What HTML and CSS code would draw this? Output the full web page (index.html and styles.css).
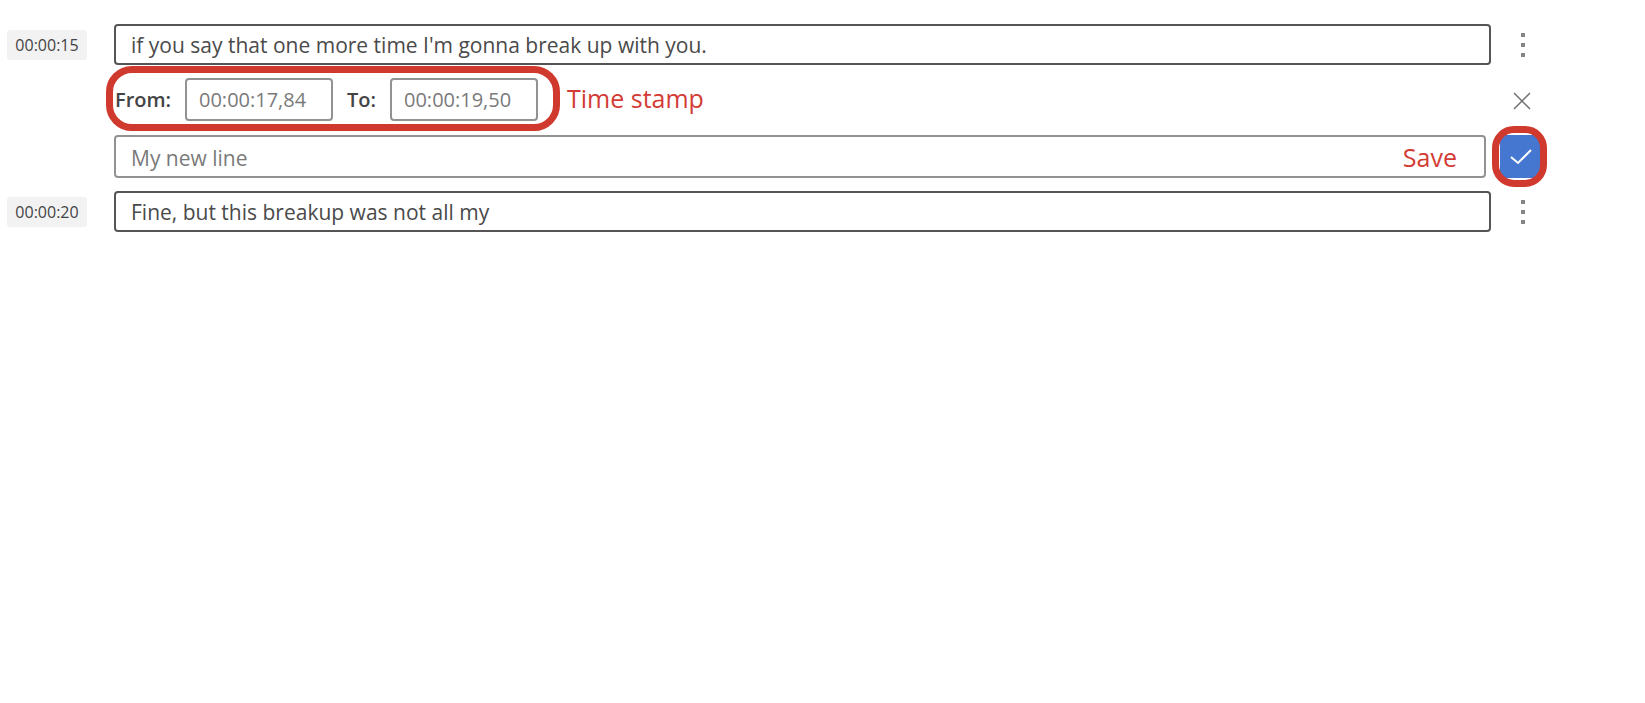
FILE: index.html
```html
<!DOCTYPE html>
<html lang="en">
<head>
<meta charset="utf-8">
<title>Transcript editor</title>
<link rel="stylesheet" href="styles.css">
</head>
<body>
<main class="transcript">
  <div class="row">
    <label class="time" for="line-1">00:00:15</label>
    <input class="field line" id="line-1" type="text" value="if you say that one more time I'm gonna break up with you.">
    <button class="icon-button" type="button" aria-label="More options">
      <svg class="dots" viewBox="0 0 8 24"><path d="M2 0h4v4H2zM2 10h4v4H2zM2 20h4v4H2z"/></svg>
    </button>
  </div>
  <form class="editor">
    <div class="editor-row">
      <div class="range">
        <label class="range-label" for="from">From:</label>
        <input class="field stamp" id="from" type="text" value="00:00:17,84">
        <label class="range-label to" for="to">To:</label>
        <input class="field stamp" id="to" type="text" value="00:00:19,50">
      </div>
      <span class="note">Time stamp</span>
      <button class="icon-button close" type="button" aria-label="Cancel">
        <svg class="cross" viewBox="0 0 20 20"><path d="M2 2l16 16M18 2L2 18"/></svg>
      </button>
    </div>
    <div class="editor-row">
      <div class="new-line">
        <input class="field draft" type="text" aria-label="New line" value="My new line">
        <span class="note save-note">Save</span>
      </div>
      <div class="save-wrap">
        <button class="save" type="button" aria-label="Save">
          <svg class="check" viewBox="0 0 24 18"><path d="M2 9l7 6L22 2"/></svg>
        </button>
      </div>
    </div>
  </form>
  <div class="row">
    <label class="time" for="line-2">00:00:20</label>
    <input class="field line" id="line-2" type="text" value="Fine, but this breakup was not all my">
    <button class="icon-button" type="button" aria-label="More options">
      <svg class="dots" viewBox="0 0 8 24"><path d="M2 0h4v4H2zM2 10h4v4H2zM2 20h4v4H2z"/></svg>
    </button>
  </div>
</main>
</body>
</html>
```

FILE: styles.css
```css
* { box-sizing: border-box; }

body {
  margin: 0;
  background: #fff;
  color: #444;
  font: 20px/28px "Open Sans", "Noto Sans", sans-serif;
}

.transcript {
  display: flex;
  flex-direction: column;
  gap: 13px;
  padding: 24px 104px 24px 7px;
}

.row {
  display: flex;
  align-items: center;
  gap: 14px;
}

.time {
  flex: none;
  width: 80px;
  margin-right: 13px;
  border-radius: 3px;
  background: #f2f2f2;
  font-size: 16px;
  line-height: 30px;
  text-align: center;
}

.field {
  min-width: 0;
  margin: 0;
  border: 2px solid #929292;
  border-radius: 4px;
  background: #fff;
  color: #7a7a7a;
  font: inherit;
}

.line {
  flex: 1;
  height: 41px;
  padding: 0 15px;
  border-color: #555;
  color: #4a4a4a;
  font-size: 21px;
}

.icon-button {
  display: flex;
  flex: none;
  align-items: center;
  justify-content: center;
  width: 36px;
  height: 36px;
  padding: 0;
  border: 0;
  background: none;
}

.dots {
  width: 8px;
  height: 24px;
  fill: #858585;
}

.cross {
  width: 20px;
  height: 20px;
  fill: none;
  stroke: #707070;
  stroke-width: 1.5;
}

.editor {
  display: flex;
  flex-direction: column;
  gap: 14px;
  margin-left: 107px;
}

.editor-row {
  display: flex;
  align-items: center;
  gap: 14px;
}

.range {
  position: relative;
  display: flex;
  align-items: center;
}

.range::after {
  content: "";
  position: absolute;
  inset: -12px -22px -10px -8px;
  border: 7px solid #d0392e;
  border-radius: 26px;
  pointer-events: none;
}

.range-label {
  width: 71px;
  padding-left: 1px;
  font-weight: 600;
}

.to {
  width: 57px;
  padding-left: 14px;
}

.stamp {
  width: 148px;
  height: 43px;
  padding: 0 12px;
}

.note {
  margin-left: 15px;
  padding-bottom: 3px;
  color: #d33b35;
  font-size: 25px;
  line-height: 32px;
}

.close {
  margin-left: auto;
  padding: 3px 3px 0 0;
}

.new-line {
  position: relative;
  flex: 1;
}

.draft {
  display: block;
  width: 100%;
  height: 43px;
  padding: 2px 15px 0;
  font-size: 21px;
}

.save-note {
  position: absolute;
  top: 6px;
  right: 29px;
  margin: 0;
}

.save-wrap {
  position: relative;
  display: flex;
}

.save-wrap::after {
  content: "";
  position: absolute;
  inset: -9px -6px -9px -8px;
  border: 7px solid #d0392e;
  border-radius: 22px;
  pointer-events: none;
}

.save {
  display: flex;
  align-items: center;
  justify-content: center;
  width: 41px;
  height: 43px;
  padding: 0;
  border: 0;
  border-radius: 3px;
  background: #4577d0;
}

.check {
  width: 24px;
  height: 18px;
  fill: none;
  stroke: #fff;
  stroke-width: 2;
}
```
